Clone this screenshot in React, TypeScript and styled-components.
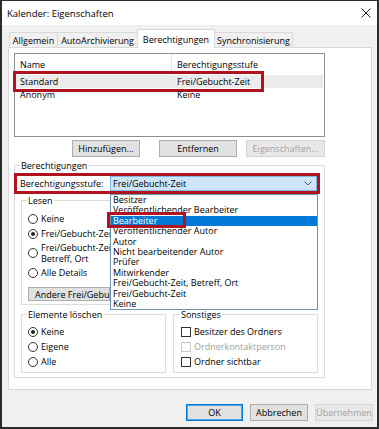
import React from "react";
import styled, { createGlobalStyle } from "styled-components";

const GlobalStyle = createGlobalStyle`
  html, body { margin: 0; padding: 0; background: #ffffff; }
  body {
    font-family: "Segoe UI", "Open Sans", "Noto Sans", sans-serif;
    font-size: 9px;
    color: #000;
  }
  * { box-sizing: border-box; }
`;

const levels = [
  "Besitzer",
  "Veröffentlichender Bearbeiter",
  "Bearbeiter",
  "Veröffentlichender Autor",
  "Autor",
  "Nicht bearbeitender Autor",
  "Prüfer",
  "Mitwirkender",
  "Frei/Gebucht-Zeit, Betreff, Ort",
  "Frei/Gebucht-Zeit",
  "Keine",
];

function App() {
  return (
    <>
      <GlobalStyle />
      <Window>
        <TitleBar>
          <Title>Kalender: Eigenschaften</Title>
          <svg width="10" height="10" viewBox="0 0 10 10">
            <path d="M0.5 0.5 L9.5 9.5 M9.5 0.5 L0.5 9.5" stroke="#1e1e1e" strokeWidth="1" />
          </svg>
        </TitleBar>

        <TabStrip>
          <Tab $w={49}>Allgemein</Tab>
          <Tab $w={81}>AutoArchivierung</Tab>
          <Tab $w={78} $active>
            Berechtigungen
          </Tab>
          <Tab $w={79}>Synchronisierung</Tab>
        </TabStrip>

        <Panel>
          <ListBox>
            <ListHeader>
              <HeaderCell $sep>Name</HeaderCell>
              <HeaderCell>Berechtigungsstufe</HeaderCell>
            </ListHeader>
            <ListRow $selected>
              <Cell>Standard</Cell>
              <Cell>Frei/Gebucht-Zeit</Cell>
              <RowMark />
            </ListRow>
            <ListRow>
              <Cell>Anonym</Cell>
              <Cell>Keine</Cell>
            </ListRow>
          </ListBox>

          <ListButtons>
            <Button $w={68} $gap={19}>
              Hinzufügen...
            </Button>
            <Button $w={78} $gap={9}>
              Entfernen
            </Button>
            <Button $w={79} disabled>
              Eigenschaften...
            </Button>
          </ListButtons>

          <OuterGroup>
            <Legend>Berechtigungen</Legend>
            <LevelRow>
              <LevelLabel>Berechtigungsstufe:</LevelLabel>
              <Combo>
                <span>Frei/Gebucht-Zeit</span>
                <svg width="8" height="5" viewBox="0 0 8 5">
                  <path d="M0.5 0.5 L4 4 L7.5 0.5" stroke="#5a5a5a" strokeWidth="1" fill="none" />
                </svg>
                <DropList>
                  {levels.map((l) => (
                    <DropItem key={l} $active={l === "Bearbeiter"}>
                      {l}
                      {l === "Bearbeiter" && <ItemMark />}
                    </DropItem>
                  ))}
                </DropList>
              </Combo>
              <LevelMark />
            </LevelRow>

            <GroupGrid>
              {/* the open list covers the right part of this group */}
              <Group>
                <Legend>Lesen</Legend>
                <Option>
                  <Radio />
                  <Label $clip>Keine</Label>
                </Option>
                <Option>
                  <Radio $checked />
                  <Label $clip>Frei/Gebucht-Zeit</Label>
                </Option>
                <Option $tall>
                  <Radio />
                  <Label $clip $lines>
                    Frei/Gebucht-Zeit,
                    <br />
                    Betreff, Ort
                  </Label>
                </Option>
                <Option>
                  <Radio />
                  <Label $clip>Alle Details</Label>
                </Option>
                <WideButton>Andere Frei/Gebucht-Optionen...</WideButton>
              </Group>
              <div />

              <Group $low>
                <Legend>Elemente löschen</Legend>
                <Option>
                  <Radio $checked />
                  <Label>Keine</Label>
                </Option>
                <Option>
                  <Radio />
                  <Label>Eigene</Label>
                </Option>
                <Option>
                  <Radio />
                  <Label>Alle</Label>
                </Option>
              </Group>
              <Group $low $pad={7}>
                <Legend>Sonstiges</Legend>
                <Option>
                  <Check />
                  <Label>Besitzer des Ordners</Label>
                </Option>
                <Option $disabled>
                  <Check $disabled />
                  <Label>Ordnerkontaktperson</Label>
                </Option>
                <Option>
                  <Check />
                  <Label>Ordner sichtbar</Label>
                </Option>
              </Group>
            </GroupGrid>
          </OuterGroup>
        </Panel>

        <DialogButtons>
          <Button $w={57} $gap={7} $default>
            OK
          </Button>
          <Button $w={58} $gap={7}>
            Abbrechen
          </Button>
          <Button $w={58} disabled>
            Übernehmen
          </Button>
        </DialogButtons>
      </Window>
    </>
  );
}

const Window = styled.div`
  width: 379px;
  height: 429px;
  border: 2px solid #2b2b2b;
  border-top-width: 1px;
  background: #f0f0f0;
  display: flex;
  flex-direction: column;
  overflow: hidden;
`;

const TitleBar = styled.div`
  height: 24px;
  background: #ffffff;
  display: flex;
  align-items: center;
  justify-content: space-between;
  padding: 0 6px 0 5px;
`;

const Title = styled.div`
  font-size: 9.5px;
`;

const TabStrip = styled.div`
  height: 22px;
  display: flex;
  align-items: flex-end;
  padding-left: 7px;
  position: relative;
  z-index: 1;
`;

const Tab = styled.div<{ $w: number; $active?: boolean }>`
  width: ${(p) => p.$w}px;
  height: ${(p) => (p.$active ? 19 : 15)}px;
  margin-left: -1px;
  margin-bottom: ${(p) => (p.$active ? -1 : 0)}px;
  border: 1px solid #d9d9d9;
  border-bottom: none;
  background: ${(p) => (p.$active ? "#ffffff" : "#f0f0f0")};
  display: flex;
  align-items: center;
  justify-content: center;
  padding-top: ${(p) => (p.$active ? 0 : 1)}px;
  white-space: nowrap;
  &:first-child {
    margin-left: 0;
  }
`;

const Panel = styled.div`
  margin-left: 6px;
  width: 364px;
  height: 343px;
  flex: none;
  border: 1px solid #d9d9d9;
  background: #ffffff;
  padding: 5px 0 0 5px;
`;

const ListBox = styled.div`
  width: 311px;
  height: 84px;
  border: 1px solid #8e8f8f;
  background: #ffffff;
`;

const ListHeader = styled.div`
  display: grid;
  grid-template-columns: 157px 1fr;
  height: 21px;
`;

const HeaderCell = styled.div<{ $sep?: boolean }>`
  display: flex;
  align-items: center;
  padding-left: 5px;
  padding-bottom: 1px;
  border-right: ${(p) => (p.$sep ? "1px solid #e5e5e5" : "none")};
`;

const ListRow = styled.div<{ $selected?: boolean }>`
  position: relative;
  display: grid;
  grid-template-columns: 157px 1fr;
  height: 13px;
  margin-right: 1px;
  background: ${(p) => (p.$selected ? "#ebebeb" : "transparent")};
`;

const Cell = styled.div`
  display: flex;
  align-items: center;
  padding-left: 5px;
  white-space: nowrap;
`;

const Callout = styled.span`
  position: absolute;
  border: 3px solid #b0131d;
  pointer-events: none;
`;

const RowMark = styled(Callout)`
  left: -2px;
  top: -4px;
  width: 251px;
  height: 21px;
`;

const ListButtons = styled.div`
  width: 311px;
  margin-top: 3px;
  display: flex;
  justify-content: flex-end;
`;

const Button = styled.button<{ $w: number; $gap?: number; $default?: boolean }>`
  width: ${(p) => p.$w}px;
  height: 17px;
  margin: 0 ${(p) => p.$gap ?? 0}px 0 0;
  padding: 0;
  font: inherit;
  color: #000;
  background: #e1e1e1;
  border: 1px solid ${(p) => (p.$default ? "#0078d7" : "#adadad")};
  box-shadow: ${(p) => (p.$default ? "inset 0 0 0 1px #5aa3e0" : "none")};
  &:disabled {
    color: #a3a3a3;
    background: #e8e8e8;
    border-color: #d4d4d4;
  }
`;

const OuterGroup = styled.fieldset`
  margin: 3px 0 0 0;
  width: 311px;
  padding: 0 6px 4px;
  border: 1px solid #dcdcdc;
  min-width: 0;
`;

const Legend = styled.legend`
  padding: 0 1px;
  margin-left: -1px;
  line-height: 11px;
  font-size: 9px;
`;

const LevelRow = styled.div`
  position: relative;
  margin: 2px 0 0 -7px;
  width: 306px;
  height: 21px;
  display: flex;
  align-items: center;
  padding-left: 6px;
  z-index: 2;
`;

const LevelLabel = styled.div`
  width: 90px;
  white-space: nowrap;
`;

const Combo = styled.div`
  position: relative;
  width: 207px;
  height: 15px;
  background: #cde5f7;
  border: 1px solid #7eb4ea;
  display: flex;
  align-items: center;
  justify-content: space-between;
  padding: 0 4px 0 2px;
`;

const LevelMark = styled(Callout)`
  left: 0;
  top: 0;
  width: 306px;
  height: 21px;
`;

const DropList = styled.div`
  position: absolute;
  left: -1px;
  top: 17px;
  width: 208px;
  border: 1px solid #6f94aa;
  background: #ffffff;
  z-index: 3;
`;

const DropItem = styled.div<{ $active?: boolean }>`
  position: relative;
  height: 10.4px;
  line-height: 10.4px;
  padding-left: 2px;
  white-space: nowrap;
  background: ${(p) => (p.$active ? "#0078d7" : "transparent")};
  color: ${(p) => (p.$active ? "#ffffff" : "#000")};
`;

const ItemMark = styled(Callout)`
  left: -4px;
  top: -4px;
  width: 79px;
  height: 16px;
  z-index: 4;
`;

const GroupGrid = styled.div`
  margin-top: 1px;
  display: grid;
  grid-template-columns: 145px 145px;
  column-gap: 7px;
  row-gap: 4px;
`;

const Group = styled.fieldset<{ $low?: boolean; $pad?: number }>`
  margin: 0;
  min-width: 0;
  padding: ${(p) => (p.$low ? 4 : 5)}px ${(p) => p.$pad ?? 6}px 3px;
  border: 1px solid #dcdcdc;
  overflow: hidden;
`;

const Option = styled.div<{ $tall?: boolean; $disabled?: boolean }>`
  display: flex;
  align-items: center;
  gap: 3px;
  height: ${(p) => (p.$tall ? 24 : 15)}px;
  white-space: nowrap;
  color: ${(p) => (p.$disabled ? "#a0a0a0" : "#000")};
`;

const Label = styled.span<{ $clip?: boolean; $lines?: boolean }>`
  line-height: 11px;
  max-width: ${(p) => (p.$clip ? "69px" : "none")};
  overflow: hidden;
  white-space: nowrap;
`;

const Radio = styled.span<{ $checked?: boolean }>`
  flex: none;
  width: 10px;
  height: 10px;
  border: 1px solid #333;
  border-radius: 50%;
  background: #fff;
  display: flex;
  align-items: center;
  justify-content: center;
  &::after {
    content: "";
    width: 4px;
    height: 4px;
    border-radius: 50%;
    background: ${(p) => (p.$checked ? "#222" : "transparent")};
  }
`;

const Check = styled.span<{ $disabled?: boolean }>`
  flex: none;
  width: 10px;
  height: 10px;
  border: 1px solid ${(p) => (p.$disabled ? "#cccccc" : "#333")};
  background: #fff;
`;

const WideButton = styled.button`
  margin-top: 7px;
  width: 82px;
  height: 14px;
  padding: 0 0 0 6px;
  text-align: left;
  font: inherit;
  white-space: nowrap;
  overflow: hidden;
  background: #e1e1e1;
  border: 1px solid #adadad;
`;

const DialogButtons = styled.div`
  margin-top: 14px;
  display: flex;
  justify-content: flex-end;
  padding-right: 4px;
`;

export default App;
